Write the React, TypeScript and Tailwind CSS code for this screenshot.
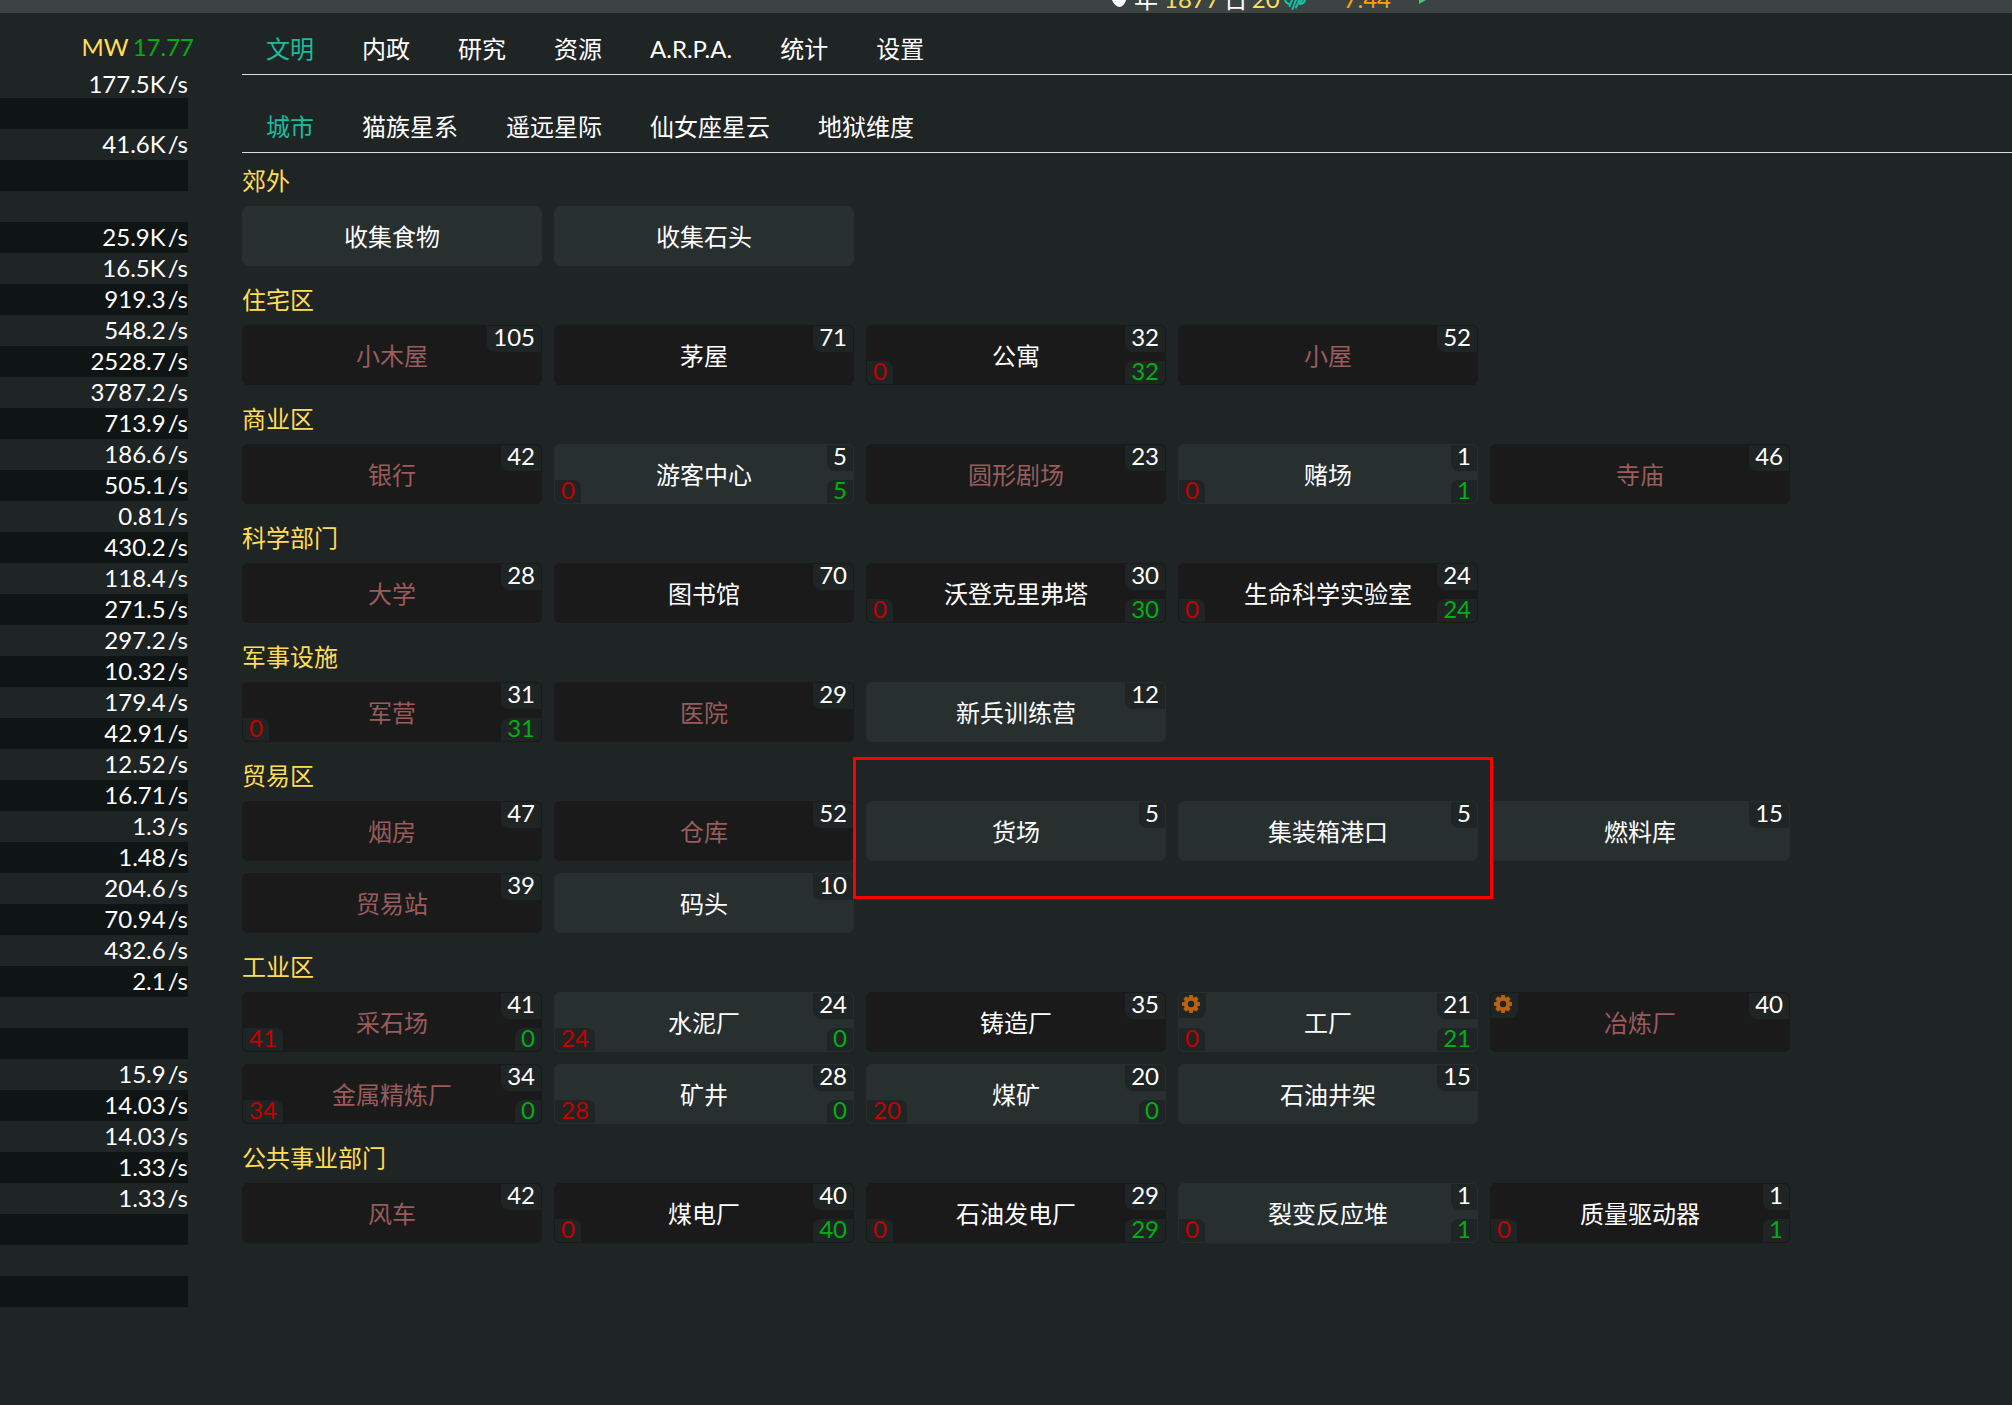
import { clsx } from "clsx";

type Building = {
  name: string;
  count?: number;
  off?: number;
  on?: number;
  state?: "ready" | "short" | "locked";
  gear?: boolean;
};

type District = {
  title: string;
  marked?: boolean;
  buildings: Building[];
};

const mainTabs = ["文明", "内政", "研究", "资源", "A.R.P.A.", "统计", "设置"];
const regionTabs = ["城市", "猫族星系", "遥远星际", "仙女座星云", "地狱维度"];

// resources without a rate keep an empty row
const rates = [
  "", "41.6K", "", "", "25.9K", "16.5K", "919.3", "548.2", "2528.7", "3787.2",
  "713.9", "186.6", "505.1", "0.81", "430.2", "118.4", "271.5", "297.2", "10.32",
  "179.4", "42.91", "12.52", "16.71", "1.3", "1.48", "204.6", "70.94", "432.6",
  "2.1", "", "", "15.9", "14.03", "14.03", "1.33", "1.33", "", "", "",
];

const districts: District[] = [
  {
    title: "郊外",
    buildings: [{ name: "收集食物" }, { name: "收集石头" }],
  },
  {
    title: "住宅区",
    buildings: [
      { name: "小木屋", count: 105, state: "locked" },
      { name: "茅屋", count: 71, state: "short" },
      { name: "公寓", count: 32, off: 0, on: 32, state: "short" },
      { name: "小屋", count: 52, state: "locked" },
    ],
  },
  {
    title: "商业区",
    buildings: [
      { name: "银行", count: 42, state: "locked" },
      { name: "游客中心", count: 5, off: 0, on: 5 },
      { name: "圆形剧场", count: 23, state: "locked" },
      { name: "赌场", count: 1, off: 0, on: 1 },
      { name: "寺庙", count: 46, state: "locked" },
    ],
  },
  {
    title: "科学部门",
    buildings: [
      { name: "大学", count: 28, state: "locked" },
      { name: "图书馆", count: 70, state: "short" },
      { name: "沃登克里弗塔", count: 30, off: 0, on: 30, state: "short" },
      { name: "生命科学实验室", count: 24, off: 0, on: 24, state: "short" },
    ],
  },
  {
    title: "军事设施",
    buildings: [
      { name: "军营", count: 31, off: 0, on: 31, state: "locked" },
      { name: "医院", count: 29, state: "locked" },
      { name: "新兵训练营", count: 12 },
    ],
  },
  {
    title: "贸易区",
    marked: true,
    buildings: [
      { name: "烟房", count: 47, state: "locked" },
      { name: "仓库", count: 52, state: "locked" },
      { name: "货场", count: 5 },
      { name: "集装箱港口", count: 5 },
      { name: "燃料库", count: 15 },
      { name: "贸易站", count: 39, state: "locked" },
      { name: "码头", count: 10 },
    ],
  },
  {
    title: "工业区",
    buildings: [
      { name: "采石场", count: 41, off: 41, on: 0, state: "locked" },
      { name: "水泥厂", count: 24, off: 24, on: 0 },
      { name: "铸造厂", count: 35, state: "short" },
      { name: "工厂", count: 21, off: 0, on: 21, gear: true },
      { name: "冶炼厂", count: 40, state: "locked", gear: true },
      { name: "金属精炼厂", count: 34, off: 34, on: 0, state: "locked" },
      { name: "矿井", count: 28, off: 28, on: 0 },
      { name: "煤矿", count: 20, off: 20, on: 0 },
      { name: "石油井架", count: 15 },
    ],
  },
  {
    title: "公共事业部门",
    buildings: [
      { name: "风车", count: 42, state: "locked" },
      { name: "煤电厂", count: 40, off: 0, on: 40, state: "short" },
      { name: "石油发电厂", count: 29, off: 0, on: 29, state: "short" },
      { name: "裂变反应堆", count: 1, off: 0, on: 1 },
      { name: "质量驱动器", count: 1, off: 0, on: 1, state: "short" },
    ],
  },
];

function Gear() {
  return (
    <svg width="18" height="18" viewBox="0 0 18 18" fill="#b9620f">
      <circle cx="9" cy="9" r="5.200" fill="none" stroke="#b9620f" strokeWidth="4" />
      {[0, 45, 90, 135, 180, 225, 270, 315].map((a) => (
        <path key={a} d="M6.800 3 7.200 0h3.600l.4 3z" transform={`rotate(${a} 9 9)`} />
      ))}
    </svg>
  );
}

function TopBar() {
  return (
    <header className="flex h-[13px] items-end justify-end overflow-hidden bg-[#3c4343] pr-[586px] leading-[29px]">
      <svg className="mr-2" width="14" height="13" viewBox="0 0 14 13">
        <path d="M0 0h14C13 4 10 7 7.5 7S1.500 4 0 0z" fill="#fff" />
      </svg>
      <span className="mr-[6px]">年</span>
      <span className="mr-1 text-[#ffdd57]">1877</span>
      <span className="mr-1">日</span>
      <span className="mr-1 text-[#ffdd57]">20</span>
      <svg className="mr-[38px]" width="22" height="13" viewBox="0 0 22 13" fill="none" stroke="#12c2a4" strokeWidth="2" strokeLinecap="round">
        <path d="M1 0c.5 2 2 3.500 4 4M21 0c-.5 2-2 3.500-4 4M8 0 5.500 6M12 0 8.500 9M15.500 0 12 7.500M18 0l-2 4" />
      </svg>
      <span className="mr-7 text-[#ff9f0f]">7.44</span>
      <svg width="7" height="13" viewBox="0 0 7 13">
        <path d="M0 0h7L0 4z" fill="#48c774" />
      </svg>
    </header>
  );
}

function Rate({ value }: { value: string }) {
  return (
    <>
      <span>{value}</span>
      <span>/s</span>
    </>
  );
}

function Sidebar() {
  return (
    <aside className="w-[194px] shrink-0 pt-[18px] leading-[29px]">
      <div className="flex justify-end gap-1 leading-[31px] text-[#ffdd57]">
        <span>MW</span>
        <span className="text-[#00af13]">17.77</span>
      </div>
      <div className="mt-[7px] mr-[6px] flex h-[29px] justify-end gap-[2px]">
        <Rate value="177.5K" />
      </div>
      {rates.map((rate, i) => (
        <div key={i} className="mr-[6px] flex h-[31px] justify-end gap-[2px] odd:bg-[#0f1414] even:bg-[#1f2424]">
          {rate && <Rate value={rate} />}
        </div>
      ))}
    </aside>
  );
}

function Tabs({ items }: { items: string[] }) {
  return (
    <nav className="flex border-b border-[#dbdee0] pt-[18px] pb-[7px] leading-9">
      {items.map((item, i) => (
        <button key={item} className={clsx("px-6", i === 0 && "text-[#1abc9c]")}>
          {item}
        </button>
      ))}
    </nav>
  );
}

function BuildingButton({ name, count, off, on, state = "ready", gear }: Building) {
  return (
    <button
      className={clsx(
        "relative h-[60px] w-[300px] rounded-md border pt-[2px] leading-9",
        state === "ready" ? "border-[#282f2f] bg-[#282f2f]" : "border-[#1a1a1a] bg-[#1a1a1a]",
        state === "locked" && "text-[#995c5c]"
      )}
    >
      {name}
      {count !== undefined && (
        <span className="absolute top-0 right-0 rounded-tr-[5px] rounded-bl-lg bg-[#1f2424] px-[6px] pb-1 leading-[22px] text-white">
          {count}
        </span>
      )}
      {on !== undefined && (
        <span className="absolute right-0 bottom-0 rounded-tl-lg rounded-br-[5px] bg-[#1f2424] px-[6px] pb-[3px] leading-5 text-[#00af13]">
          {on}
        </span>
      )}
      {off !== undefined && (
        <span className="absolute bottom-0 left-0 rounded-tr-lg rounded-bl-[5px] bg-[#1f2424] px-[6px] pb-[3px] leading-5 text-[#c40000]">
          {off}
        </span>
      )}
      {gear && (
        <span className="absolute top-0 left-0 rounded-tl-[5px] rounded-br-lg bg-[#1f2424] pt-[2px] pr-[6px] pb-[5px] pl-[3px]">
          <Gear />
        </span>
      )}
    </button>
  );
}

export default function App() {
  return (
    <div className="min-h-screen bg-[#1f2424] font-['Lato','Noto_Sans_CJK_SC',sans-serif] text-2xl text-white">
      <TopBar />
      <div className="flex gap-12">
        <Sidebar />
        <main className="min-w-0 flex-1">
          <Tabs items={mainTabs} />
          <div className="mt-4">
            <Tabs items={regionTabs} />
          </div>
          <div className="flex flex-col gap-[15px] pt-[9px]">
            {districts.map((d) => (
              <section key={d.title} className="relative">
                <h2 className="mb-[6px] leading-[38px] text-[#ffdd57]">{d.title}</h2>
                <div className="flex flex-wrap gap-3">
                  {d.buildings.map((b) => (
                    <BuildingButton key={b.name} {...b} />
                  ))}
                </div>
                {d.marked && (
                  <div className="pointer-events-none absolute top-0 left-[611px] h-[142px] w-[640px] border-[3px] border-[#ff0000]" />
                )}
              </section>
            ))}
          </div>
        </main>
      </div>
    </div>
  );
}
